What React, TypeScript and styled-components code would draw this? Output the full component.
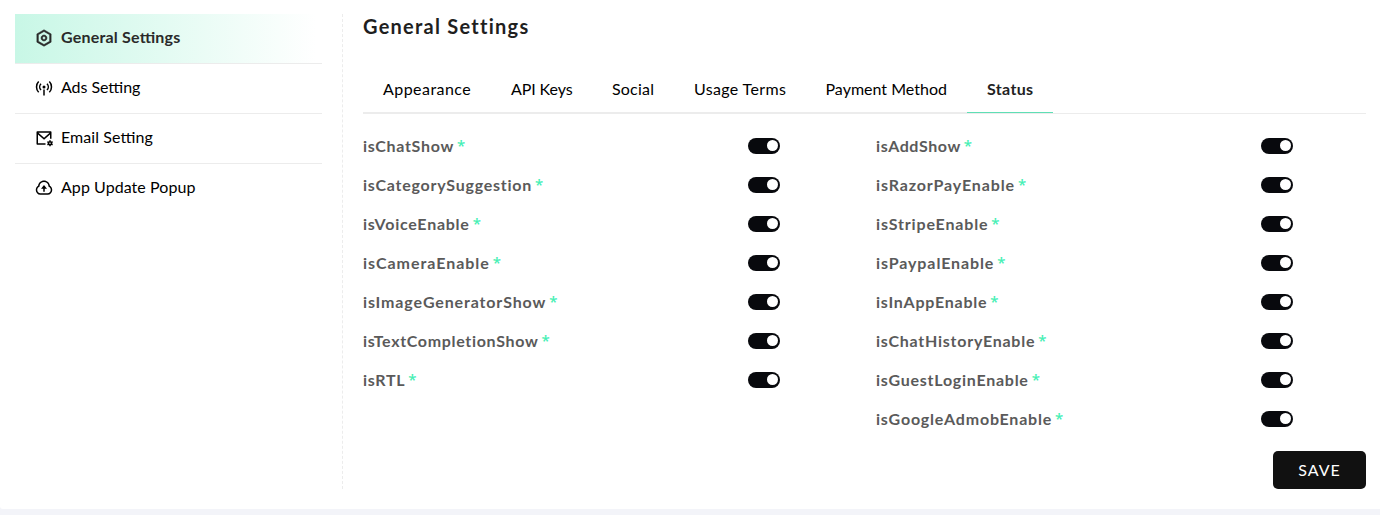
import React, { useState } from "react";
import styled, { createGlobalStyle } from "styled-components";
import { RiSettingsLine, RiMailSettingsLine, RiUploadCloudLine } from "react-icons/ri";

const GlobalStyle = createGlobalStyle`
  *, *::before, *::after { box-sizing: border-box; }
  body {
    margin: 0;
    background: #f3f4f9;
    font-family: Lato, "Liberation Sans", sans-serif;
    font-size: 16px;
    color: #000;
    overflow: hidden;
  }
  button { font: inherit; border: 0; cursor: pointer; }
`;

const Panel = styled.main`
  display: flex;
  height: 509px;
  padding: 14px 14px 20px 15px;
  background: #fff;
  border-radius: 0 0 0 3px;
`;

const Sidebar = styled.nav`
  flex: 0 0 328px;
  padding-right: 20px;
  border-right: 1px dashed #ececec;
`;

const NavItem = styled.button<{ $active: boolean }>`
  display: flex;
  align-items: center;
  gap: 8px;
  width: 100%;
  height: 50px;
  padding: 0 20px 1px;
  text-align: left;
  color: ${(p) => (p.$active ? "#2a2a2a" : "#000")};
  font-weight: ${(p) => (p.$active ? 700 : 400)};
  background: ${(p) =>
    p.$active ? "linear-gradient(90deg, #c8f7e6 0%, #ffffff 98%)" : "transparent"};
  border-bottom: 1px solid #ececec;

  &:last-child { border-bottom: 0; padding-bottom: 2px; }
  svg { flex: none; }
`;

const Tracked = styled.span<{ $tracking: number }>`
  letter-spacing: ${(p) => p.$tracking}px;
  font-feature-settings: "liga" 0;
  white-space: nowrap;
`;

const NavLabel = styled(Tracked)`
  padding-bottom: 3px;
  font-feature-settings: "liga" 1;
`;

const Content = styled.section`
  display: flex;
  flex-direction: column;
  flex: 1;
  padding-left: 20px;
`;

const Title = styled.h1`
  margin: 0;
  height: 52px;
  font-size: 20px;
  line-height: 25px;
  font-weight: 700;
  letter-spacing: 1.25px;
  color: #1f1f1f;
`;

const TabList = styled.div`
  display: flex;
  height: 48px;
  border-bottom: 1px solid #ececec;
`;

const Tab = styled.button<{ $active: boolean; $width: number }>`
  width: ${(p) => p.$width}px;
  padding: 0 0 2px 20px;
  text-align: left;
  background: transparent;
  color: ${(p) => (p.$active ? "#222" : "#000")};
  font-weight: ${(p) => (p.$active ? 700 : 400)};
  border-bottom: 1px solid ${(p) => (p.$active ? "#5fdfb5" : "#ececec")};
`;

const Columns = styled.div`
  display: grid;
  grid-template-columns: 417px 417px;
  column-gap: 96px;
  padding-top: 12px;
`;

const SettingRow = styled.div`
  display: flex;
  align-items: center;
  justify-content: space-between;
  height: 39px;
`;

const Column = styled.div`
  display: flex;
  flex-direction: column;
`;

const Label = styled.label`
  display: flex;
  font-weight: 700;
  line-height: 20px;
  color: #5a5a5a;
`;

const Required = styled.span`
  margin-left: 3px;
  font-family: "Noto Sans", sans-serif;
  font-weight: 500;
  font-size: 15px;
  line-height: 18px;
  color: #45efb4;
`;

const Switch = styled.button<{ $on: boolean }>`
  display: flex;
  align-items: center;
  justify-content: ${(p) => (p.$on ? "flex-end" : "flex-start")};
  width: 32px;
  height: 16px;
  padding: 0 2.5px;
  border-radius: 8px;
  background: ${(p) => (p.$on ? "#08090d" : "#c4c4c4")};
`;

const Knob = styled.span`
  width: 11px;
  height: 11px;
  border-radius: 50%;
  background: #fff;
`;

const Footer = styled.footer`
  display: flex;
  justify-content: flex-end;
  margin-top: auto;
`;

const SaveButton = styled.button`
  width: 93px;
  height: 38px;
  padding: 0 0 1px;
  border-radius: 5px;
  background: #111;
  color: #fff;
  letter-spacing: 1px;
`;

function AntennaIcon({ size }: { size: number }) {
  return (
    <svg
      width={size}
      height={size}
      viewBox="0 0 24 24"
      fill="none"
      stroke="currentColor"
      strokeWidth="2"
    >
      <path d="M4.9 3.4a10.2 10.2 0 0 0 0 14.2M19.1 3.4a10.2 10.2 0 0 1 0 14.2" />
      <path d="M8 6.3a6 6 0 0 0 0 8.4M16 6.3a6 6 0 0 1 0 8.4" />
      <path d="M12 14v8" />
      <circle cx="12" cy="10.5" r="2" fill="currentColor" stroke="none" />
    </svg>
  );
}

const BoldSettingsIcon = styled(RiSettingsLine)`
  stroke: currentColor;
  stroke-width: 0.7;
`;

const navItems: {
  label: string;
  icon: React.ComponentType<{ size: number }>;
  tracking: number;
}[] = [
  { label: "General Settings", icon: BoldSettingsIcon, tracking: 0.2 },
  { label: "Ads Setting", icon: AntennaIcon, tracking: -0.05 },
  { label: "Email Setting", icon: RiMailSettingsLine, tracking: 0.08 },
  { label: "App Update Popup", icon: RiUploadCloudLine, tracking: 0.06 },
];

const tabs = [
  { label: "Appearance", width: 128, tracking: 0.45 },
  { label: "API Keys", width: 101, tracking: -0.1 },
  { label: "Social", width: 82, tracking: 0.2 },
  { label: "Usage Terms", width: 131.5, tracking: 0.35 },
  { label: "Payment Method", width: 161.5, tracking: 0.01 },
  { label: "Status", width: 86, tracking: 0.35 },
];

type SettingEntry = [label: string, tracking: number];

const columns: SettingEntry[][] = [
  [
    ["isChatShow", 0.68],
    ["isCategorySuggestion", 0.75],
    ["isVoiceEnable", 0.75],
    ["isCameraEnable", 0.97],
    ["isImageGeneratorShow", 0.86],
    ["isTextCompletionShow", 0.67],
    ["isRTL", 0.68],
  ],
  [
    ["isAddShow", 0.58],
    ["isRazorPayEnable", 0.87],
    ["isStripeEnable", 0.83],
    ["isPaypalEnable", 0.9],
    ["isInAppEnable", 0.77],
    ["isChatHistoryEnable", 0.75],
    ["isGuestLoginEnable", 0.75],
    ["isGoogleAdmobEnable", 0.8],
  ],
];

function Setting({ label, tracking }: { label: string; tracking: number }) {
  const [on, setOn] = useState(true);
  return (
    <SettingRow>
      <Label>
        <Tracked $tracking={tracking}>{label}</Tracked>
        <Required>*</Required>
      </Label>
      <Switch $on={on} role="switch" aria-checked={on} aria-label={label} onClick={() => setOn(!on)}>
        <Knob />
      </Switch>
    </SettingRow>
  );
}

export default function App() {
  const [page, setPage] = useState("General Settings");
  const [tab, setTab] = useState("Status");

  return (
    <>
      <GlobalStyle />
      <Panel>
        <Sidebar>
          {navItems.map(({ label, icon: Icon, tracking }) => (
            <NavItem key={label} $active={label === page} onClick={() => setPage(label)}>
              <Icon size={18} />
              <NavLabel $tracking={tracking}>{label}</NavLabel>
            </NavItem>
          ))}
        </Sidebar>
        <Content>
          <Title>General Settings</Title>
          <TabList role="tablist">
            {tabs.map(({ label, width, tracking }) => (
              <Tab
                key={label}
                role="tab"
                aria-selected={label === tab}
                $active={label === tab}
                $width={width}
                onClick={() => setTab(label)}
              >
                <Tracked $tracking={tracking}>{label}</Tracked>
              </Tab>
            ))}
          </TabList>
          <Columns>
            {columns.map((settings, i) => (
              <Column key={i}>
                {settings.map(([label, tracking]) => (
                  <Setting key={label} label={label} tracking={tracking} />
                ))}
              </Column>
            ))}
          </Columns>
          <Footer>
            <SaveButton>SAVE</SaveButton>
          </Footer>
        </Content>
      </Panel>
    </>
  );
}
